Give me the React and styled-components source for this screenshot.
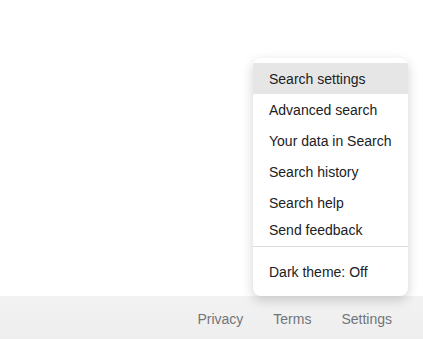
import React from "react";
import styled, { createGlobalStyle } from "styled-components";

const GlobalStyle = createGlobalStyle`
  html, body {
    margin: 0;
    padding: 0;
    background: #ffffff;
    font-family: Arial, "Liberation Sans", sans-serif;
  }
`;

const menuGroups = [
  [
    { label: "Search settings", active: true },
    { label: "Advanced search" },
    { label: "Your data in Search" },
    { label: "Search history" },
    { label: "Search help" },
    { label: "Send feedback", height: 23 },
  ],
  [{ label: "Dark theme: Off" }],
];

const footerLinks = ["Privacy", "Terms", "Settings"];

const App = () => {
  return (
    <>
      <GlobalStyle />
      <Page>
        <Main />
        <Footer>
          <Menu role="menu">
            {menuGroups.map((group, gi) => (
              <MenuGroup key={gi} $divided={gi > 0}>
                {group.map((item) => (
                  <MenuItem
                    key={item.label}
                    href="#"
                    $active={item.active}
                    $height={item.height || 31}
                  >
                    {item.label}
                  </MenuItem>
                ))}
              </MenuGroup>
            ))}
          </Menu>
          <FooterLinks>
            {footerLinks.map((l) => (
              <FooterLink key={l} href="#">
                {l}
              </FooterLink>
            ))}
          </FooterLinks>
        </Footer>
      </Page>
    </>
  );
};

const Page = styled.div`
  min-height: 100vh;
  display: flex;
  flex-direction: column;
`;

const Main = styled.div`
  flex: 1;
`;

const Footer = styled.footer`
  position: relative;
  height: 43px;
  background: linear-gradient(to bottom, #f2f2f2, #eeeeee);
  display: flex;
  align-items: center;
  justify-content: flex-end;
`;

const FooterLinks = styled.div`
  display: flex;
  padding-right: 16px;
  margin-top: 3px;
`;

const FooterLink = styled.a`
  padding: 0 15px;
  font-size: 14px;
  line-height: 20px;
  color: #70757a;
  text-decoration: none;
`;

const Menu = styled.div`
  position: absolute;
  bottom: 100%;
  right: 15px;
  width: 155px;
  padding-top: 5px;
  background: #ffffff;
  border-radius: 8px;
  box-shadow: 0 4px 12px rgba(0, 0, 0, 0.18);
  overflow: hidden;
  z-index: 2;
`;

const MenuGroup = styled.div`
  display: flex;
  flex-direction: column;
  border-top: ${(p) => (p.$divided ? "1px solid #dadce0" : "none")};
  margin-top: ${(p) => (p.$divided ? "5px" : "0")};
  padding: ${(p) => (p.$divided ? "9px 0" : "0")};
`;

const MenuItem = styled.a`
  display: flex;
  align-items: center;
  height: ${(p) => p.$height}px;
  padding: 0 16px;
  font-size: 14px;
  color: #202124;
  text-decoration: none;
  white-space: nowrap;
  background: ${(p) => (p.$active ? "#e6e6e6" : "transparent")};
`;

export default App;
